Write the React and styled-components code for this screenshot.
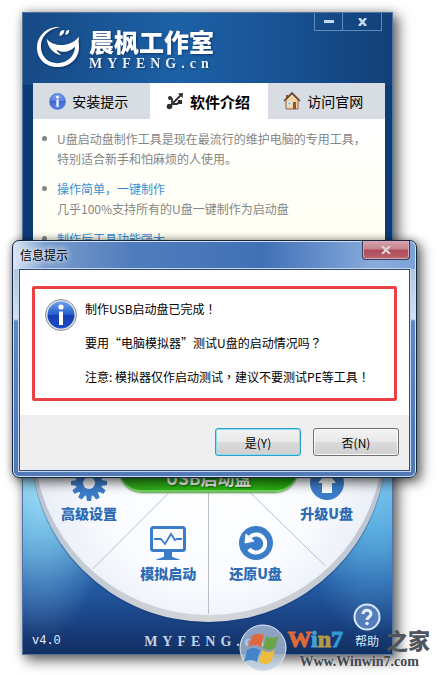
import React from 'react';
import styled, { createGlobalStyle, css } from 'styled-components';

const sans = '"Noto Sans CJK SC", "Liberation Sans", sans-serif';
const serif = '"Liberation Serif", serif';

const GlobalStyle = createGlobalStyle`
  * { box-sizing: border-box; }
  body { margin: 0; background: #fff; font-family: ${sans}; font-size: 12px; color: #000; }
  button { font-family: inherit; padding: 0; border: 0; background: none; cursor: pointer; }
  svg { display: block; }
  p, h1, h2, ul { margin: 0; padding: 0; }
`;

const Stage = styled.main`
  position: relative;
  min-height: 675px;
  padding: 12px 44px 20px 22px;
  overflow: hidden;
`;

const AppWindow = styled.section`
  display: flex;
  flex-direction: column;
  min-height: 643px;
  border: 1px solid #52749f;
  background: linear-gradient(90deg, #174985, #1c61a6 42%, #1a5598 65%, #124078) top / 100% 72px no-repeat, #0d3c75;
  box-shadow: 5px 5px 12px 1px rgba(0, 0, 0, 0.55), 0 0 8px rgba(0, 0, 0, 0.22);
`;

const Header = styled.header`
  display: flex;
  justify-content: space-between;
  align-items: flex-start;
  height: 70px;
  padding-right: 10px;
`;

const Brand = styled.div`
  display: flex;
  gap: 9px;
  padding: 13px 0 0 14px;
  color: #fff;
  filter: drop-shadow(1px 1px 1px rgba(0, 20, 60, 0.5));
`;

const BrandName = styled.h1`
  font-size: 25px;
  font-weight: 900;
  line-height: 30px;
`;

const Domain = styled.p`
  font: bold 14px/16px ${serif};
  letter-spacing: 5px;
  color: ${(p) => p.$tone || '#e8f0fa'};
  white-space: nowrap;
`;

const Controls = styled.div`
  display: flex;
  border: 1px solid #5f8abb;
  border-top: 0;
`;

const ControlButton = styled.button`
  display: grid;
  place-items: center;
  width: ${(p) => p.$width}px;
  height: 17px;
  & + & { border-left: 1px solid #5f8abb; }
`;

const Body = styled.div`
  flex: 1;
  margin: 0 7px 0 10px;
  background: linear-gradient(#fff 40px, #fffff0 180px);
`;

const Tabs = styled.nav`
  display: grid;
  grid-template-columns: 1fr 1fr 1fr;
`;

const Tab = styled.button`
  display: flex;
  align-items: center;
  justify-content: center;
  gap: 6px;
  height: 36px;
  padding-right: 6px;
  font-size: 14px;
  white-space: nowrap;
  background: #d7dde3;
  ${(p) => p.$active && css`
    padding-right: 2px;
    background: #fff;
    font-size: 15px;
    font-weight: bold;
  `}
`;

const FeatureList = styled.ul`
  display: grid;
  gap: 10px;
  padding: 10px 8px 0 24px;
  list-style: none;
  line-height: 20px;
  color: #858585;
`;

const Feature = styled.li`
  position: relative;
  &::before {
    content: '';
    position: absolute;
    left: -15px;
    top: 7px;
    width: 5px;
    height: 5px;
    border-radius: 50%;
    background: #858585;
  }
`;

const FeatureTitle = styled.h2`
  font-size: 12px;
  font-weight: normal;
  color: #398fd6;
`;

const WheelPanel = styled.section`
  position: relative;
  isolation: isolate;
  height: 254px;
  padding: 46px 39px 0 38px;
  background:
    radial-gradient(ellipse 70px 150px at 18px 90px, rgba(160, 225, 250, 0.75), transparent),
    radial-gradient(ellipse 70px 130px at 350px 110px, rgba(110, 195, 240, 0.6), transparent),
    linear-gradient(#84c4ea 80px, #4797d0 130px, #255fa8 180px, #1c468a 215px, #122f62);
`;

const WheelArt = styled.svg`
  position: absolute;
  inset: 0;
  z-index: -1;
  width: 100%;
  height: 100%;
`;

const WheelRow = styled.div`
  display: flex;
  justify-content: ${(p) => (p.$centered ? 'center' : 'space-between')};
  gap: ${(p) => (p.$centered ? 33 : 2)}px;
  padding: ${(p) => (p.$centered ? '4px 0 0 8px' : '0')};
`;

const WheelItem = styled.button`
  display: grid;
  justify-items: center;
  gap: 4px;
  padding-top: ${(p) => p.$offset || 0}px;
  color: #2d6bb4;
  font-size: 14px;
  font-weight: 900;
  line-height: 16px;
  white-space: nowrap;
`;

const StartButton = styled.button`
  flex: 1;
  height: 46px;
  padding-top: 18px;
  border-radius: 23px;
  border-bottom: 2px solid #71d45c;
  color: #fff;
  font-size: 17px;
  font-weight: bold;
  background: linear-gradient(90deg, #2ea51b, #31bd16 50%, #24a90d);
  box-shadow: 0 1px 2px #478d42;
  text-shadow: 1px 1px 2px #126204;
`;

const Footer = styled.footer`
  display: grid;
  grid-template-columns: 1fr auto 1fr;
  align-items: end;
  margin: 22px -28px 0 -29px;
  color: #e3edf8;
`;

const Version = styled.span`
  font: 12px/18px "Liberation Mono", monospace;
`;

const HelpButton = styled.button`
  display: grid;
  justify-items: center;
  justify-self: end;
  gap: 1px;
  color: #dfeaf7;
  font-size: 12px;
  line-height: 18px;
`;

const Dialog = styled.section`
  position: absolute;
  top: 240px;
  left: 12px;
  right: 20px;
  padding: 0 6px 6px;
  border: 1px solid #17253f;
  border-radius: 7px;
  background:
    linear-gradient(90deg, #dce9f8, #7a9dcc 8%, #4f7cbc 30%, #4170b6 62%, #88acdc 90%, #7ba2d7) top / 100% 28px no-repeat,
    linear-gradient(#99b6dd, #d2e0f4 78px, #6287c9 80px, #4f7ac2 190px, #5279b5);
  box-shadow: inset 0 0 0 1px #cfe1f5, 4px 4px 12px 1px rgba(0, 0, 0, 0.55), 0 0 7px rgba(0, 0, 0, 0.28);
`;

const DialogBar = styled.header`
  display: flex;
  justify-content: space-between;
  height: 28px;
  padding-left: 1px;
  line-height: 27px;
`;

const DialogTitle = styled.h2`
  font-size: 12px;
  font-weight: normal;
  text-shadow: 0 0 6px #fff, 0 0 6px #fff;
`;

const DialogClose = styled.button`
  display: grid;
  place-items: center;
  width: 48px;
  height: 19px;
  border: 1px solid #363d5a;
  border-top: 0;
  border-radius: 0 0 4px 4px;
  background: linear-gradient(#d5a2ac, #c4848f 45%, #ac4b56 50%, #bb6571);
  box-shadow: inset 0 0 0 1px #d8a8b4;
`;

const DialogContent = styled.div`
  border: 1px solid #304b78;
  outline: 1px solid #c8d9ee;
  background: #fff;
`;

const Notice = styled.div`
  display: flex;
  gap: 8px;
  margin: 16px 12px 14px;
  min-height: 115px;
  padding: 10px 8px 6px 10px;
  border: 3px solid #ea4144;
  border-radius: 2px;
`;

const NoticeText = styled.div`
  display: grid;
  align-content: start;
  gap: 14px;
  line-height: 20px;
  white-space: nowrap;
`;

const Mark = styled.span`
  font-family: "Noto Sans CJK TC", sans-serif;
`;

const Actions = styled.div`
  display: flex;
  justify-content: flex-end;
  gap: 12px;
  height: 55px;
  padding: 13px 10px 0;
  background: #efefef;
`;

const ActionButton = styled.button`
  width: 86px;
  height: 28px;
  border: 1px solid ${(p) => (p.$primary ? '#2b9fc4' : '#707070')};
  border-radius: 3px;
  background: linear-gradient(#f3f3f3, #e9e9e9 48%, #dadada 52%, #cfcfcf);
  box-shadow: inset 0 0 0 1px ${(p) => (p.$primary ? '#8edcf1' : '#fbfbfb')};
  font-size: 12px;
`;

const Watermark = styled.aside`
  position: absolute;
  top: 624px;
  right: 7px;
  display: flex;
  white-space: nowrap;
`;

const WatermarkWords = styled.div`
  padding-top: 3px;
`;

const WatermarkName = styled.p`
  display: flex;
  justify-content: space-between;
  align-items: center;
  gap: 43px;
  height: 25px;
  font: bold 24px/25px ${serif};
`;

const Tint = styled.span`
  color: ${(p) => p.$color};
  -webkit-text-stroke: 1px ${(p) => p.$color};
`;

const Suffix = styled.span`
  font: 900 22px/25px "Noto Sans CJK SC", sans-serif;
  color: #50545b;
`;

const WatermarkUrl = styled.p`
  padding-left: 12px;
  font: bold 14px/20px ${serif};
  color: #42454e;
  text-shadow: 0 0 2px #fff8;
`;

const SmileLogo = () => (
  <svg width="43" height="43" viewBox="0 0 44 44" fill="#fff" aria-hidden="true">
    <path d="M24 1C9 0 0 11 0 22c0 12 9 20 21 20 13 0 22-9 22-20 0-4-.5-6-1-9-1 1-2 3-3 4 1 12-6 21-18 21C11 38 4 31 4 21 4 10 12 3 24 1Z" />
    <path d="M10 13c6 8 23 10 33-2 0 7-5 13-12 15-5 1-8 0-11-2 1 3 3 4 5 6-9-2-14-8-15-17Z" />
    <path d="M28 4c-4 0-5 3-5 6 3 0 5-3 5-6ZM33 4c-3 0-4 2-4 5 3 0 4-2 4-5Z" />
  </svg>
);

const InfoIcon = ({ size, id, rim }) => (
  <svg width={size} height={size} viewBox="0 0 32 32" aria-hidden="true">
    <defs>
      <linearGradient id={id} x2="0" y2="1">
        <stop stopColor={rim ? '#6aa0ec' : '#82a7f4'} />
        <stop offset=".48" stopColor={rim ? '#275ecb' : '#527cdf'} />
        <stop offset=".5" stopColor={rim ? '#173eb2' : '#3d66d7'} />
        <stop offset="1" stopColor={rim ? '#1b4cc5' : '#5e8bea'} />
      </linearGradient>
    </defs>
    <circle cx="16" cy="16" r="15.500" fill={rim ? '#e1e3e8' : '#4067c5'} stroke={rim ? '#8d8f97' : '#86a4e6'} />
    <circle cx="16" cy="16" r="13.500" fill={`url(#${id})`} />
    <circle cx="16" cy="8" r="2.600" fill="#fff" />
    <path d="M14 12.500h4V26h-4Z" fill="#fff" />
  </svg>
);

const UsbIcon = () => (
  <svg width="18" height="18" viewBox="0 0 18 18" fill="none" stroke="#303030" strokeWidth="1.800" aria-hidden="true">
    <path d="M3 15 15 3M6 12V7L3 5M6 12l5 0 2-2" />
    <circle cx="3.500" cy="14.500" r="2.800" fill="#303030" stroke="none" />
    <circle cx="4" cy="6" r="2" fill="#303030" stroke="none" />
    <path d="m12 1.500 5-.5-.5 5ZM12 8h4v4h-4Z" fill="#303030" stroke="none" />
  </svg>
);

const HomeIcon = () => (
  <svg width="18" height="18" viewBox="0 0 18 18" aria-hidden="true">
    <path d="M3 8 9 2l6 6v9H3Z" fill="#f4d4a6" stroke="#84664e" />
    <path d="M3 3h2v4H3Z" fill="#a65238" />
    <path d="m1 9 8-8 8 8" fill="none" stroke="#6b4836" strokeWidth="1.700" />
    <path d="M10 10h3v7h-3Z" fill="#985126" />
    <path d="M5 10h3v3H5Z" fill="#79b6db" stroke="#fff" strokeWidth=".7" />
  </svg>
);

const GearIcon = () => (
  <svg width="36" height="36" viewBox="0 0 36 36" aria-hidden="true">
    <g fill="#3b7dc9">
      {[0, 30, 60, 90, 120, 150].map((angle) => (
        <path key={angle} d="M16 0h4l1 6v24l-1 6h-4l-1-6V6Z" transform={`rotate(${angle} 18 18)`} />
      ))}
      <circle cx="18" cy="18" r="13" />
    </g>
    <circle cx="18" cy="18" r="6" fill="#f3f6fb" />
  </svg>
);

const UpgradeIcon = () => (
  <svg width="36" height="36" viewBox="0 0 36 36" aria-hidden="true">
    <circle cx="18" cy="18" r="17" fill="#3b7dc9" />
    <path d="m18 7 9 11h-4v10H13V18H9Z" fill="#fff" />
  </svg>
);

const MonitorIcon = () => (
  <svg width="36" height="36" viewBox="0 0 36 36" fill="none" aria-hidden="true">
    <rect x="1.500" y="2.500" width="33" height="23" rx="2" stroke="#3b7dc9" strokeWidth="3" />
    <path d="M4 14h7l4 5 6-10 4 6 2-1h5" stroke="#3b7dc9" strokeWidth="1.800" />
    <path d="M14 27h8v4c0 2 6 2 8 4H6c2-2 8-2 8-4Z" fill="#3b7dc9" />
  </svg>
);

const RestoreIcon = () => (
  <svg width="36" height="36" viewBox="0 0 36 36" fill="none" aria-hidden="true">
    <circle cx="18" cy="18" r="17" fill="#3b7dc9" />
    <path d="M12 12a9 9 0 1 1-1 12" stroke="#fff" strokeWidth="4" />
    <path d="m7 18 1-9 8 7Z" fill="#fff" stroke="#fff" strokeLinejoin="round" />
  </svg>
);

const WheelBackdrop = () => (
  <WheelArt viewBox="0 0 370 254" preserveAspectRatio="xMidYMax slice" aria-hidden="true">
    <defs>
      <radialGradient id="face" cx=".5" cy=".6" r=".5">
        <stop stopColor="#fff" />
        <stop offset=".6" stopColor="#fafcff" />
        <stop offset="1" stopColor="#e8edf6" />
      </radialGradient>
      <linearGradient id="rim" x2="1">
        <stop stopColor="#bcc6d1" />
        <stop offset=".5" stopColor="#d5d6d8" />
        <stop offset="1" stopColor="#bcc6d1" />
      </linearGradient>
    </defs>
    <circle cx="186" cy="46" r="178" fill="#133a7466" />
    <circle cx="186" cy="44" r="178" fill="url(#rim)" />
    <circle cx="186" cy="40" r="175" fill="url(#face)" />
    <path d="M146 93 70 169M186 93v121M228 93l75 73" stroke="#b9bec7" />
  </WheelArt>
);

const WindowsBadge = () => (
  <svg width="48" height="48" viewBox="0 0 48 48" aria-hidden="true">
    <circle cx="24" cy="24" r="23" fill="#b9cae1" fillOpacity=".72" stroke="#e4edf6" />
    <path d="M13 12q5-4 12-1l-3 12q-7-4-13 0Z" fill="#df6840" />
    <path d="M27 12q6 4 13 0l-4 12q-6 4-12 0Z" fill="#6ba449" />
    <path d="M8 26q7-4 13 0l-3 12q-7-4-13 0Z" fill="#4385c8" />
    <path d="M23 26q6 4 13 0l-4 12q-6 4-12 0Z" fill="#efbd3e" />
  </svg>
);

export default function App() {
  return (
    <>
      <GlobalStyle />
      <Stage>
        <AppWindow>
          <Header>
            <Brand>
              <SmileLogo />
              <div>
                <BrandName>晨枫工作室</BrandName>
                <Domain>MYFENG.cn</Domain>
              </div>
            </Brand>
            <Controls>
              <ControlButton $width={27} aria-label="最小化">
                <svg width="10" height="3"><path d="M0 1.500h10" stroke="#c4daef" strokeWidth="3" /></svg>
              </ControlButton>
              <ControlButton $width={39} aria-label="关闭">
                <svg width="9" height="8"><path d="m1 0 7 8M8 0 1 8" stroke="#c4daef" strokeWidth="2.500" /></svg>
              </ControlButton>
            </Controls>
          </Header>

          <Body>
            <Tabs>
              <Tab><InfoIcon size={17} id="tabInfo" />安装提示</Tab>
              <Tab $active><UsbIcon />软件介绍</Tab>
              <Tab><HomeIcon />访问官网</Tab>
            </Tabs>
            <FeatureList>
              <Feature>
                <p>U盘启动盘制作工具是现在最流行的维护电脑的专用工具，<br />特别适合新手和怕麻烦的人使用。</p>
              </Feature>
              <Feature>
                <FeatureTitle>操作简单，一键制作</FeatureTitle>
                <p>几乎100%支持所有的U盘一键制作为启动盘</p>
              </Feature>
              <Feature>
                <FeatureTitle>制作后工具功能强大</FeatureTitle>
              </Feature>
            </FeatureList>
          </Body>

          <WheelPanel>
            <WheelBackdrop />
            <WheelRow>
              <WheelItem $offset={19}><GearIcon />高级设置</WheelItem>
              <StartButton>USB启动盘</StartButton>
              <WheelItem $offset={19}><UpgradeIcon />升级U盘</WheelItem>
            </WheelRow>
            <WheelRow $centered>
              <WheelItem><MonitorIcon />模拟启动</WheelItem>
              <WheelItem><RestoreIcon />还原U盘</WheelItem>
            </WheelRow>
            <Footer>
              <Version>v4.0</Version>
              <Domain $tone="#c3d3e8">MYFENG.cn</Domain>
              <HelpButton>
                <svg width="28" height="28" viewBox="0 0 28 28" aria-hidden="true">
                  <circle cx="14" cy="14" r="12.500" fill="#537ebb" stroke="#dce9f7" strokeWidth="2" />
                  <path d="M10 11c0-5 8-5 8 0 0 3-4 3-4 6" fill="none" stroke="#e7f0fa" strokeWidth="3" />
                  <circle cx="14" cy="20.500" r="1.800" fill="#e7f0fa" />
                </svg>
                帮助
              </HelpButton>
            </Footer>
          </WheelPanel>
        </AppWindow>

        <Dialog role="dialog" aria-labelledby="dialog-title">
          <DialogBar>
            <DialogTitle id="dialog-title">信息提示</DialogTitle>
            <DialogClose aria-label="关闭">
              <svg width="10" height="8"><path d="m1 0 8 8M9 0 1 8" stroke="#e6d2d9" strokeWidth="2.200" /></svg>
            </DialogClose>
          </DialogBar>
          <DialogContent>
            <Notice>
              <InfoIcon size={32} id="dialogInfo" rim />
              <NoticeText>
                <p>制作USB启动盘已完成<Mark>！</Mark></p>
                <p>要用“电脑模拟器”测试U盘的启动情况吗<Mark>？</Mark></p>
                <p>注意: 模拟器仅作启动测试<Mark>，</Mark>建议不要测试PE等工具<Mark>！</Mark></p>
              </NoticeText>
            </Notice>
            <Actions>
              <ActionButton $primary>是(Y)</ActionButton>
              <ActionButton>否(N)</ActionButton>
            </Actions>
          </DialogContent>
        </Dialog>

        <Watermark>
          <WindowsBadge />
          <WatermarkWords>
            <WatermarkName>
              <span>
                <Tint $color="#e06a37">W</Tint>
                <Tint $color="#4a9fd0">i</Tint>
                <Tint $color="#b49a45">n</Tint>
                <Tint $color="#309bd2">7</Tint>
              </span>
              <Suffix>之家</Suffix>
            </WatermarkName>
            <WatermarkUrl>Www.Winwin7.com</WatermarkUrl>
          </WatermarkWords>
        </Watermark>
      </Stage>
    </>
  );
}
